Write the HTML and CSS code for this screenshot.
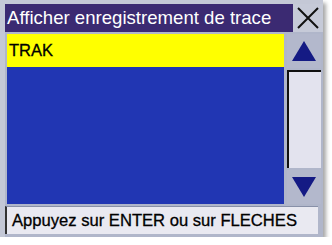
FILE: index.html
```html
<!DOCTYPE html>
<html>
<head>
<meta charset="utf-8">
<link rel="stylesheet" href="styles.css">
</head>
<body>
<div class="screen">
  <div class="titlebar">
    <div class="title">Afficher enregistrement de trace</div>
    <div class="close">
      <svg width="24" height="24" viewBox="0 0 24 24"><path d="M2 2 L22 22 M22 2 L2 22" stroke="#111" stroke-width="2" fill="none"/></svg>
    </div>
  </div>
  <div class="main">
    <div class="list">
      <div class="row selected">TRAK</div>
    </div>
    <div class="scrollbar">
      <div class="btn">
        <svg width="26" height="22" viewBox="0 0 26 22"><polygon points="13,1 25,21 1,21" fill="#141a84"/></svg>
      </div>
      <div class="track"></div>
      <div class="btn">
        <svg width="26" height="22" viewBox="0 0 26 22"><polygon points="1,1 25,1 13,21" fill="#141a84"/></svg>
      </div>
    </div>
  </div>
  <div class="status">Appuyez sur ENTER ou sur FLECHES</div>
</div>
</body>
</html>
```
FILE: styles.css
```css
html, body {
  margin: 0;
  padding: 0;
  background: #ffffff;
}
body {
  font-family: "Liberation Sans", Arial, sans-serif;
}
.screen {
  width: 318px;
  height: 232px;
  background: #b0b6ca;
  border-top: 5px solid #c4c8d6;
  border-left: 5px solid #c4c8d6;
  display: flex;
  flex-direction: column;
  box-shadow: 3px 3px 4px rgba(0,0,0,0.35);
  box-sizing: content-box;
}
.titlebar {
  display: flex;
  height: 28px;
  margin-top: -1px;
}
.title {
  width: 288px;
  background: #3b2a72;
  color: #ffffff;
  font-size: 18.6px;
  line-height: 28px;
  padding-left: 2px;
  box-sizing: border-box;
  white-space: nowrap;
  overflow: hidden;
}
.close {
  flex: 1;
  background: #c6cad8;
  display: flex;
  align-items: center;
  justify-content: center;
}
.main {
  display: flex;
  margin-top: 2px;
  height: 170px;
}
.list {
  width: 277px;
  margin-left: 2px;
  background: #2136b3;
}
.row {
  height: 33px;
  line-height: 33px;
  padding-left: 2px;
  font-size: 16.5px;
  color: #000;
  -webkit-text-stroke: 0.3px #000;
}
.selected {
  background: #ffff00;
}
.scrollbar {
  width: 34px;
  margin-left: 3px;
  display: flex;
  flex-direction: column;
}
.btn {
  height: 34px;
  background: #b3b8cc;
  display: flex;
  align-items: center;
  justify-content: center;
}
.track {
  flex: 1;
  background: #e3e3ee;
  border-left: 2px solid #111;
  border-top: 2px solid #111;
  margin: 2px 0;
}
.status {
  margin-top: 2px;
  width: 313px;
  height: 28px;
  background: #e9e9f1;
  border-left: 2px solid #333;
  border-top: 1px solid #8890a8;
  box-sizing: border-box;
  font-size: 16.6px;
  line-height: 27px;
  padding-left: 5px;
  color: #000;
  white-space: nowrap;
  -webkit-text-stroke: 0.3px #000;
}
```
